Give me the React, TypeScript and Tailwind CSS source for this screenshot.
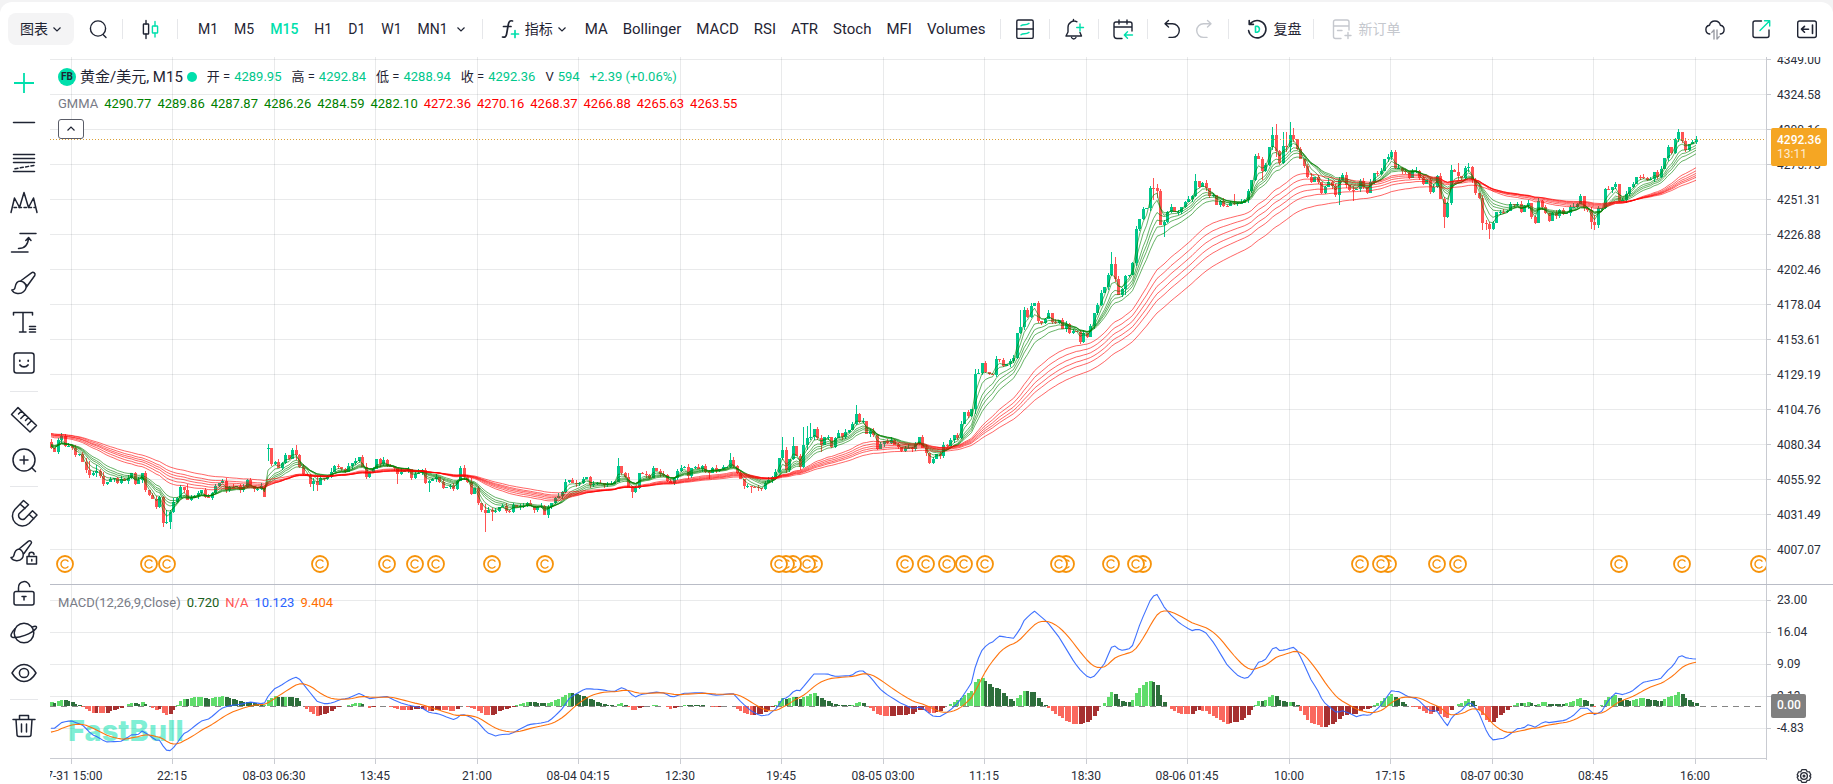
import React from "react";

/* ------------------------------------------------------------------ */
/* Market data                                                         */
/* ------------------------------------------------------------------ */

const STEP = 3.5;
const FIRST = -6;
const LAST = 464;
const ZERO = 706;

const barX = (i: number) => 72 + STEP * i;

// Runs of closing levels: start index, level offset, then one close per bar.
const RUNS: [number, number, number[]][] = [
  [-6, 400, [
    145, 155, 120, 108, 138, 138, 143, 165, 162, 185, 210, 225, 220, 212, 227, 252, 247, 237, 235, 248,
    237, 243, 233, 220, 252, 240, 220, 270, 285, 298, 320, 290, 368, 366, 335, 305, 293, 262, 270, 300,
    295, 288, 280, 270, 292, 293, 278, 258, 250, 243, 270, 260, 262, 257, 270, 262, 240, 257, 268, 268,
    258, 290,
  ]],
  [56, 400, [
    145, 192, 187, 203, 188, 165, 178, 150, 165, 200, 222, 228, 252, 243, 255, 233, 236, 230, 215, 198,
    200, 208, 217, 198, 190, 182, 170, 200, 230, 217, 207, 178, 192, 180, 198, 200, 205, 222, 215, 212,
    208, 235, 222, 218, 210, 248, 243, 238, 232, 245, 263, 260, 258, 268, 242, 205, 230, 245, 283, 265,
    308, 330, 338, 330, 335, 332, 320, 318, 332, 335, 315, 322, 318, 318, 308, 318, 330, 322, 318, 345,
    322,
  ]],
  [137, 380, [
    370, 355, 348, 335, 305, 300, 310, 312, 308, 297, 292, 315, 312, 308, 310, 315, 312, 312, 305, 258,
    280, 290, 320, 335, 325, 280, 282, 285, 293, 265, 272, 282, 285, 303, 308, 295, 272, 265, 260, 288,
    265, 262, 268, 258, 275, 280, 265, 272, 268, 262, 260, 240, 258, 280, 298, 318, 318, 320, 322, 325,
    328, 308, 300, 290, 275, 235, 210, 270, 238, 198, 228, 262, 195, 175, 172, 147, 175, 195, 172, 172,
    200, 175, 160, 172, 155, 150, 132, 102, 125, 122, 163, 153, 165, 207, 192, 182, 188, 180, 195, 200,
    212, 203, 203, 207, 192, 170, 205, 220, 248, 238, 222, 228, 195, 197, 180, 165, 175, 132, 97, 107, 88,
  ]],
  [258, 100, [
    822, 818, 790, 815, 823, 824, 778, 780, 797, 793, 783, 775, 700, 680, 630, 650, 618, 610, 662, 670,
    658, 640, 665, 668, 660, 687, 672, 698, 693, 696, 725, 700, 710, 678, 640, 615, 580, 562, 525, 492,
    538, 584, 567, 528, 525, 490, 387, 358, 328, 325, 264, 265, 274, 374, 365, 337, 322, 337, 336, 320,
    307, 297, 287, 243, 260, 250, 265, 288, 286, 314, 304, 317, 319, 310, 312, 310, 308, 300, 273, 240,
    168, 178, 212, 196, 142, 105, 152, 189, 138, 140, 105, 118, 148, 178, 197, 230, 245, 232, 245, 278,
    262, 245, 258, 285, 240, 225, 256, 269, 270, 268, 243, 262, 278,
  ]],
  [371, 100, [
    245, 218, 222, 213, 178, 170, 155, 205, 203, 213, 217, 233, 212, 212, 235, 253, 240, 275, 262, 227,
    297, 350, 310, 210, 215, 228, 235, 203, 200, 240, 280, 293, 370, 372, 386, 370, 337, 336, 337, 332,
    312, 313, 312, 335, 318, 308, 352, 368, 303, 322, 338, 362, 340, 348, 330, 343, 340, 320, 320,
  ]],
  [430, 100, [
    312, 288, 325, 330, 365, 375, 325, 325, 268, 270, 262, 253, 302, 300, 282, 262, 253, 230, 232, 233,
    240, 237, 215, 232, 208, 175, 142, 158, 118, 97, 122, 150, 133, 125, 118,
  ]],
];

// Long wicks: bar index -> [high, low]
const WICKS: Record<number, [number, number]> = {
  [-3]: [433, 443], 5: [461, 478], 7: [465, 477], 26: [496, 527], 27: [510, 524], 28: [510, 529],
  33: [484, 500], 56: [444, 461], 64: [445, 460], 69: [478, 491], 70: [477, 491], 93: [470, 484],
  102: [480, 492], 112: [465, 480], 118: [504, 532], 120: [508, 521], 156: [458, 480], 160: [486, 498],
  166: [466, 478], 182: [470, 479], 188: [453, 468], 192: [480, 489], 194: [486, 493], 203: [437, 460],
  206: [437, 460], 209: [427, 468], 210: [426, 450], 211: [423, 440], 214: [435, 452], 224: [405, 425],
  258: [369, 414], 271: [310, 334], 272: [307, 330], 297: [252, 276], 298: [257, 282], 301: [275, 295],
  309: [178, 200], 310: [184, 198], 312: [220, 237], 321: [174, 197], 332: [194, 205], 340: [157, 180],
  343: [127, 150], 344: [124, 157], 346: [132, 164], 347: [132, 152], 348: [122, 152], 349: [128, 142],
  362: [177, 205], 366: [186, 201], 377: [150, 160], 392: [197, 228], 394: [165, 205], 396: [163, 180],
  399: [163, 172], 403: [195, 230], 404: [220, 230], 405: [222, 239], 435: [215, 230], 434: [207, 229],
  459: [129, 142],
};

// Sessions that open away from the previous close
const OPENS: Record<number, number> = { 56: 449 };

type Bar = { i: number; open: number; close: number; high: number; low: number };

function buildBars(): Bar[] {
  const close: Record<number, number> = {};
  for (const [start, top, levels] of RUNS) {
    levels.forEach((v, k) => {
      close[start + k] = top + v / 3;
    });
  }
  const bars: Bar[] = [];
  let prev = 442;
  for (let i = FIRST; i <= LAST; i++) {
    const c = close[i] ?? prev;
    const o = OPENS[i] ?? prev;
    const top = Math.min(o, c);
    const bottom = Math.max(o, c);
    const w = WICKS[i];
    const up = ((i * 7 + 61) % 5) * 0.8;
    const down = ((i * 11 + 83) % 4) * 0.9;
    bars.push({
      i,
      open: o,
      close: c,
      high: w ? Math.min(w[0], top) : top - up,
      low: w ? Math.max(w[1], bottom) : bottom + down,
    });
    prev = c;
  }
  return bars;
}

const BARS = buildBars();

function ema(values: number[], period: number, seed: number): number[] {
  const a = 2 / (period + 1);
  let e = seed;
  return values.map((v) => (e = e + a * (v - e)));
}

const toPath = (ys: number[]) =>
  ys.map((y, k) => `${k ? "L" : "M"}${barX(FIRST + k)} ${y.toFixed(1)}`).join("");

const CLOSES = BARS.map((b) => b.close);
const SHORT = ([[3, 444], [5, 445], [8, 445], [10, 445], [12, 444], [15, 444]] as const).map(([p, s]) =>
  toPath(ema(CLOSES, p, s)),
);
const LONG = ([[30, 436], [35, 435], [40, 434], [45, 434], [50, 433], [60, 433]] as const).map(([p, s]) =>
  toPath(ema(CLOSES, p, s)),
);

// DIF line: origin, horizontal scale, and turning points
const DIF_RUNS: [number, number, number, number[][]][] = [
  [40, 580, 2.613, [
    [26, 445], [38, 445], [57, 427], [80, 422], [100, 430], [112, 436], [135, 463], [152, 472], [172, 486],
    [212, 484], [240, 464], [256, 464], [266, 453], [282, 463], [302, 480], [312, 480], [328, 510],
    [340, 512], [352, 500], [374, 462], [386, 455], [420, 424], [443, 416], [474, 385], [498, 376],
    [525, 373], [548, 366], [585, 372], [598, 345], [615, 324], [628, 318], [648, 302], [667, 291],
    [675, 293], [690, 315], [724, 364], [745, 372], [765, 368], [785, 358], [805, 355], [835, 340],
    [860, 356], [905, 349], [940, 368], [965, 376], [998, 384], [1018, 398], [1040, 401], [1084, 420],
    [1102, 402], [1122, 410], [1142, 424], [1168, 458], [1190, 468], [1202, 464], [1230, 462], [1276, 434],
    [1310, 429], [1330, 424], [1362, 390], [1385, 352], [1425, 326], [1460, 328], [1500, 335], [1520, 323],
    [1535, 330], [1553, 352], [1562, 348],
  ]],
  [640, 540, 2.529, [
    [0, 464], [40, 456], [60, 459], [82, 472], [110, 460], [155, 458], [195, 466], [235, 460], [255, 485],
    [280, 512], [305, 528], [325, 524], [345, 505], [362, 474], [372, 474], [392, 450], [405, 452],
    [440, 402], [475, 402], [490, 409], [535, 407], [550, 393], [565, 393], [585, 414], [605, 445],
    [625, 464], [660, 490], [690, 506], [710, 500], [740, 528], [758, 530], [780, 515], [805, 488],
    [838, 430], [850, 370], [866, 328], [880, 312], [892, 306], [908, 288], [945, 295], [962, 265],
    [972, 240], [997, 213], [1030, 246], [1060, 292], [1100, 370], [1115, 392], [1136, 415], [1150, 408],
    [1175, 370], [1192, 322], [1200, 317], [1215, 332], [1238, 326], [1246, 316], [1265, 250], [1290, 182],
    [1305, 158], [1325, 200], [1340, 222], [1365, 250], [1395, 272], [1410, 267], [1430, 277], [1452, 310],
    [1485, 375], [1510, 405],
  ]],
  [1240, 540, 2.644, [
    [0, 410], [12, 415], [25, 411], [48, 367], [65, 362], [88, 323], [95, 322], [105, 332], [125, 328],
    [140, 321], [150, 330], [165, 362], [188, 420], [205, 450], [220, 485], [238, 502], [255, 518],
    [272, 512], [290, 520], [308, 530], [325, 524], [342, 527], [370, 500], [400, 452], [420, 455],
    [445, 470], [470, 478], [500, 512], [520, 512], [548, 558], [562, 528], [585, 512], [605, 488],
    [615, 492], [632, 520], [655, 582], [668, 600], [700, 594], [733, 566], [750, 564], [763, 553],
    [780, 562], [805, 544], [815, 548], [860, 541], [880, 528], [900, 505], [920, 505], [937, 524],
    [955, 516], [975, 480], [993, 459], [1012, 464], [1035, 455], [1065, 427], [1112, 416], [1135, 386],
    [1145, 378], [1160, 350], [1168, 347], [1180, 354], [1205, 357],
  ]],
];

const DIF_POINTS = DIF_RUNS.flatMap(([x0, y0, s, pts]) => pts.map(([x, y]) => [x0 + x / s, y0 + y / 3]));

function sample(points: number[][], x: number): number {
  const k = points.findIndex((p) => p[0] >= x);
  if (k < 0) return points[points.length - 1][1];
  if (k === 0) return points[0][1];
  const [x0, y0] = points[k - 1];
  const [x1, y1] = points[k];
  return y0 + ((y1 - y0) * (x - x0)) / (x1 - x0);
}

const DIF = BARS.map((b) => sample(DIF_POINTS, barX(b.i)));
const DEA = ema(DIF, 9, 733);
const HIST = DIF.map((d, k) => DEA[k] - d);

const PRICES = [
  "4349.00", "4324.58", "4300.16", "4275.73", "4251.31", "4226.88", "4202.46", "4178.04", "4153.61",
  "4129.19", "4104.76", "4080.34", "4055.92", "4031.49", "4007.07",
];
const MACD_LEVELS = ["23.00", "16.04", "9.09", "2.13", "-4.83"];
const TIMES = [
  "07-31 15:00", "22:15", "08-03 06:30", "13:45", "21:00", "08-04 04:15", "12:30", "19:45", "08-05 03:00",
  "11:15", "18:30", "08-06 01:45", "10:00", "17:15", "08-07 00:30", "08:45", "16:00",
];
const EVENTS = [
  65, 149, 167, 320, 387, 415, 436, 492, 545, 779, 786, 793, 807, 814, 905, 926, 947, 964, 985, 1059, 1066,
  1111, 1136, 1143, 1360, 1381, 1388, 1437, 1458, 1619, 1682, 1759,
];
const gridX = (k: number) => Math.floor(71 + 101.5 * k);

/* ------------------------------------------------------------------ */
/* Chart                                                               */
/* ------------------------------------------------------------------ */

function Chart() {
  return (
    <svg
      viewBox="50 57 1783 727"
      className="block h-auto w-full font-[Roboto,'Noto_Sans_CJK_SC',sans-serif]"
      role="img"
      aria-label="黄金/美元 M15"
    >
      <defs>
        <clipPath id="plot">
          <rect x="50" y="57" width="1716" height="702" />
        </clipPath>
      </defs>

      <g fill="#2a2e39" fillOpacity="0.1" shapeRendering="crispEdges">
        {PRICES.map((p, k) => (
          <rect key={p} x="50" y={59 + 35 * k} width="1716" height="1" />
        ))}
        {MACD_LEVELS.map((p, k) => (
          <rect key={p} x="50" y={600 + 32 * k} width="1716" height="1" />
        ))}
        {TIMES.map((t, k) => (
          <rect key={t} x={gridX(k)} y="57" width="1" height="701" />
        ))}
      </g>

      <g clipPath="url(#plot)">
        <g shapeRendering="crispEdges">
          {BARS.map((b) => {
            const x = Math.floor(barX(b.i));
            const top = Math.round(Math.min(b.open, b.close));
            const bottom = Math.round(Math.max(b.open, b.close));
            const high = Math.round(b.high);
            return (
              <g key={b.i} fill={b.close <= b.open ? "#00c78b" : "#ff5353"}>
                <rect x={x} y={high} width="1" height={Math.max(1, Math.round(b.low) - high)} />
                <rect x={x - 1} y={top} width="3" height={Math.max(1, bottom - top)} />
              </g>
            );
          })}
        </g>
        <g fill="none" strokeWidth="1" strokeLinejoin="round">
          {SHORT.map((d, k) => (
            <path key={k} d={d} stroke="#008000" strokeOpacity="0.6" />
          ))}
          {LONG.map((d, k) => (
            <path key={k} d={d} stroke="#ff0000" strokeOpacity="0.6" />
          ))}
        </g>

        <path d="M50 139.5H1766" stroke="#dba036" strokeWidth="1" strokeDasharray="1 2" shapeRendering="crispEdges" />

        <path d="M50 706.5H1766" stroke="#858585" strokeWidth="1" strokeDasharray="6 5" shapeRendering="crispEdges" />
        <g shapeRendering="crispEdges">
          {HIST.map((h, k) => {
            const size = Math.round(Math.abs(h));
            if (!size) return null;
            const rising = k === 0 || h >= HIST[k - 1];
            const fill = h > 0 ? (rising ? "#5fdc6b" : "#2d6e3b") : rising ? "#a63030" : "#fa685e";
            return (
              <rect
                key={k}
                x={Math.floor(barX(FIRST + k)) - 1}
                y={h > 0 ? ZERO - size : ZERO}
                width={k % 2 ? 3 : 4}
                height={size}
                fill={fill}
              />
            );
          })}
        </g>
        <text x="68" y="741" fontSize="29" fontWeight="800" fill="#00dfac" fillOpacity="0.5" className="font-[Inter,sans-serif]">
          FastBull
        </text>
        <path d={toPath(DIF)} fill="none" stroke="#2962ff" strokeOpacity="0.9" strokeWidth="1.1" strokeLinejoin="round" />
        <path d={toPath(DEA)} fill="none" stroke="#ff6d00" strokeOpacity="0.95" strokeWidth="1.1" strokeLinejoin="round" />

        {[...EVENTS].reverse().map((x) => (
          <g key={x} transform={`translate(${x} 564)`} stroke="#f7930a">
            <circle r="8" fill="#fff" strokeWidth="1.8" />
            <path d="M3.4 -2.4A4.1 4.1 0 1 0 3.4 2.4" fill="none" strokeWidth="1.4" />
          </g>
        ))}
      </g>

      <g fill="#c9cbd1" shapeRendering="crispEdges">
        <rect x="1766" y="57" width="1" height="703" />
        <rect x="50" y="758" width="1717" height="1" />
        <rect x="50" y="584" width="1783" height="1" fill="#b9bcc6" />
        {PRICES.map((p, k) => (
          <rect key={p} x="1767" y={59 + 35 * k} width="4" height="1" />
        ))}
        {MACD_LEVELS.map((p, k) => (
          <rect key={p} x="1767" y={600 + 32 * k} width="4" height="1" />
        ))}
        {TIMES.map((t, k) => (
          <rect key={t} x={gridX(k)} y="759" width="1" height="5" />
        ))}
      </g>

      <g fontSize="12" fill="#2a2e39">
        {PRICES.map((p, k) => (
          <text key={p} x="1777" y={64 + 35 * k}>{p}</text>
        ))}
        {MACD_LEVELS.map((p, k) => (
          <text key={p} x="1777" y={604 + 32 * k}>{p}</text>
        ))}
        {TIMES.map((t, k) => (
          <text key={t} x={gridX(k)} y="780" textAnchor="middle">{t}</text>
        ))}
      </g>

      <rect x="1771" y="128" width="56" height="38" rx="2" fill="#f5a623" />
      <text x="1777" y="144" fontSize="12" fontWeight="500" fill="#fff">4292.36</text>
      <text x="1777" y="158" fontSize="12" fill="#fff" fillOpacity="0.8">13:11</text>
      <rect x="1771" y="694" width="35" height="24" rx="2" fill="#808080" />
      <text x="1777" y="709" fontSize="12" fontWeight="500" fill="#fff">0.00</text>

      <g transform="translate(1804 776)" fill="none" stroke="#2a2e39" strokeWidth="1.3">
        <path d="M-2 -6.3H2L3.2 -4.4L5.4 -4.2L6.8 -1.2L5.7 0L6.8 1.2L5.4 4.2L3.2 4.4L2 6.3H-2L-3.2 4.4L-5.4 4.2L-6.8 1.2L-5.7 0L-6.8 -1.2L-5.4 -4.2L-3.2 -4.4Z" />
        <circle r="3.4" />
        <circle r="0.9" />
      </g>
    </svg>
  );
}

/* ------------------------------------------------------------------ */
/* Icons                                                               */
/* ------------------------------------------------------------------ */

const ACCENT = "#00dfac";

function Icon({ children }: { children: React.ReactNode }) {
  return (
    <svg
      width="24"
      height="24"
      viewBox="0 0 24 24"
      fill="none"
      stroke="currentColor"
      strokeWidth="1.4"
      strokeLinecap="round"
      strokeLinejoin="round"
      aria-hidden="true"
    >
      {children}
    </svg>
  );
}

const Chevron = () => (
  <svg width="10" height="10" viewBox="0 0 10 10" fill="none" stroke="currentColor" strokeWidth="1.2" aria-hidden="true">
    <path d="M1.5 3.5L5 7L8.5 3.5" />
  </svg>
);

const SearchIcon = () => (
  <Icon><circle cx="12" cy="11.5" r="7.6" /><path d="M17 17.5L20 20.5" /></Icon>
);
const CandleIcon = () => (
  <Icon>
    <path d="M8 3.5V7M8 17V21.5" /><rect x="5.4" y="7" width="5.2" height="10" rx="0.6" />
    <g stroke={ACCENT}><path d="M17 4.5V9M17 16V20" /><rect x="14.4" y="9" width="5.2" height="7" rx="0.6" /></g>
  </Icon>
);
const FxIcon = () => (
  <Icon>
    <path d="M15.5 4C13 3.2 11.8 4.5 11.3 7.5L9.6 17C9.1 19.8 8 20.6 5.5 20M6.5 9.5H14" strokeWidth="1.7" />
    <path d="M18 13.5V20.5M14.5 17H21.5" stroke={ACCENT} strokeWidth="1.7" />
  </Icon>
);
const PanelsIcon = () => (
  <Icon>
    <rect x="3.8" y="3" width="16.4" height="18.4" rx="1.5" /><path d="M3.8 12H20.2" />
    <path d="M8 8.8C10.5 6.5 12.5 9 16 6.4M8 17.8C10.5 15.5 12.5 18 16 15.4" stroke={ACCENT} />
  </Icon>
);
const BellIcon = () => (
  <Icon>
    <path d="M15 4.8A6.2 6.2 0 0 0 6 10.5V15L4 19H19.5L18 15.5M11.5 2.5V4M9.5 20.5C10.5 22.4 13 22.4 14 20.5" />
    <path d="M18 7V14M14.7 10.5H21.5" stroke={ACCENT} />
  </Icon>
);
const CalendarIcon = () => (
  <Icon>
    <path d="M11 21.5H6A3 3 0 0 1 3 18.5V7A2 2 0 0 1 5 5H19A2 2 0 0 1 21 7V14M3 10H21M8 3V7M16 3V7" />
    <path d="M21.5 18H13.5M16.5 14.8L13.3 18L16.5 21.2" stroke={ACCENT} />
  </Icon>
);
const UndoIcon = () => (
  <Icon><path d="M5.5 6.8H12.5A6.8 6.8 0 0 1 12.5 20.4H9M8.5 3.5L5 6.8L8.5 10" /></Icon>
);
const RedoIcon = () => (
  <Icon><path d="M18.5 6.8H11.5A6.8 6.8 0 0 0 11.5 20.4H15M15.5 3.5L19 6.8L15.5 10" /></Icon>
);
const ReplayIcon = () => (
  <Icon>
    <path d="M3.6 13.5A8.7 8.7 0 1 0 7 5.2L5 6.6M4.2 3.6V7.4H8.4" strokeWidth="1.6" />
    <path d="M10.5 9.2V15.2H12.2C15.2 14.2 15.2 10.2 12.2 9.2Z" stroke={ACCENT} strokeWidth="1.6" />
  </Icon>
);
const OrderIcon = () => (
  <Icon><path d="M11 21.5H5.5A2 2 0 0 1 3.5 19.5V5A2 2 0 0 1 5.5 3H17A2 2 0 0 1 19 5V13M3.5 9H19M7.5 13.5H12M18 15.5V21.5M15 18.5H21" /></Icon>
);
const CloudIcon = () => (
  <Icon>
    <path d="M6.8 17A4.4 4.4 0 0 1 6.5 8.3A5.6 5.6 0 0 1 17.4 8.3A4.4 4.4 0 0 1 17.3 17" />
    <path d="M11 22V13L8.8 15.4M14 13V22L16.2 19.6" stroke="#9a9ca3" />
  </Icon>
);
const ShareIcon = () => (
  <Icon>
    <path d="M12.5 4H6A2 2 0 0 0 4 6V18.5A2 2 0 0 0 6 20.5H18A2 2 0 0 0 20 18.5V13" />
    <path d="M11 13.5L20.5 4M15.5 3.8H20.7V9" stroke={ACCENT} />
  </Icon>
);
const CollapseIcon = () => (
  <Icon>
    <rect x="2.7" y="4" width="18.6" height="16.5" rx="2" />
    <path d="M17.5 8V16.5M13.5 12.2H6.5M9.5 9.3L6.5 12.2L9.5 15.2" strokeWidth="1.6" />
  </Icon>
);

const tools: { name: string; icon: React.ReactNode }[][] = [
  [
    { name: "十字光标", icon: <path d="M14 4V24M4 14H24" stroke={ACCENT} strokeWidth="1.8" strokeLinecap="butt" /> },
    { name: "趋势线", icon: <path d="M3.5 13.5H24.5" /> },
    { name: "斐波那契", icon: <><path d="M3.5 5.5H24.5M3.5 9.5H24.5M3.5 13.5H24.5M3.5 22.5H24.5" /><path d="M5 19.8L24 16.4" strokeDasharray="3 2.4" /></> },
    { name: "形态", icon: <><path d="M1 23.5L4.5 9L9.5 18.5L14 3.5L18.5 18.5L23.5 9L27 23.5" /><path d="M4 18.5H25" strokeDasharray="2.5 2.5" /></> },
    { name: "预测", icon: <path d="M10 4.5H26M1.5 23H18M8.5 19.5C15 19.5 18 16.5 18.5 9M15.8 11.5L18.6 8.5L21 11.5" /> },
    { name: "画笔", icon: <path d="M10.5 12L21.5 3.8C23.5 2.5 25.8 4.5 24.8 6.5L16.5 18M10.5 12C6.5 12 5.5 15.5 5 18.5C4.8 20 3.3 21 1.8 21C4 25.2 10.5 25.5 13.5 22.8C16.5 20.2 17 17 14.8 14.5C13.7 13 12.2 12.2 10.5 12M14 13.5L17.3 17" /> },
    { name: "文本", icon: <path d="M3.5 6V3.5H22.5V6M13 3.5V23M9.5 23H16M19.5 17.5H25.5M19.5 20.3H25.5M19.5 23H25.5" /> },
    { name: "表情", icon: <><rect x="4" y="4" width="20" height="20" rx="2.5" /><path d="M9.8 11.5V12M18.2 11.5V12M10 16C12 18.6 16 18.6 18 16" strokeWidth="1.8" /></> },
  ],
  [
    { name: "测量", icon: <path d="M8 1.6L26.5 19.5L20 26L1.5 8.5ZM11.5 5L8.5 8M15 8.3L10.8 12.5M18.3 11.5L15.5 14.5M21.5 14.8L17.5 18.8" /> },
    { name: "放大", icon: <><circle cx="14" cy="14" r="11" /><path d="M10 14H18M14 10V18M21.5 21.5L25.5 25.5" /></> },
  ],
  [
    { name: "磁铁", icon: <path d="M13.5 1.5L4.8 10.5A10 10 0 0 0 19 24.5L27 16L22.5 11.8L14.5 20A4 4 0 0 1 9 14.8L18.5 5.8ZM10 5L15 9.4M19 15.3L23.8 19.8" /> },
    { name: "锁定画笔", icon: <path d="M9 10L18.5 2.2C20.3 1 22.2 2.8 21.2 4.4L14 14.5M9 10C5.5 10.5 4.5 13.5 4 16C3.8 17.7 2.5 18.5 1 18.6C3.5 22.5 9.5 22.5 12 19.5C14 17 13.5 13.5 11.5 11.5C10.8 10.6 10 10.2 9 10M17 17.5H26.5V25H17ZM19 17.5V15.5C19 12.5 24 12.5 24 15.5M21.8 20.5V22" /> },
    { name: "锁定", icon: <path d="M6 12.5H22A2 2 0 0 1 24 14.5V24A2 2 0 0 1 22 26H6A2 2 0 0 1 4 24V14.5A2 2 0 0 1 6 12.5ZM8.5 12.5V9A5.7 5.7 0 0 1 19.8 7.5M12 17.5H16M14 17.5V21" /> },
    { name: "显示对象", icon: <><circle cx="14" cy="14" r="9.8" /><path d="M5 9.8C1 14 0 17 2.2 18.2C8 20 22 14.5 26 9.5C27.5 7.5 25.5 6.5 22.5 8" /></> },
    { name: "隐藏", icon: <><path d="M2 14C5 9 9.2 5.5 14 5.5C18.8 5.5 23 9 26 14C23 19 18.8 22.5 14 22.5C9.2 22.5 5 19 2 14Z" /><circle cx="14" cy="14" r="4.6" /></> },
  ],
  [{ name: "删除", icon: <path d="M3 7.5H25M9.5 7V3.5H18.5V7M6 7.5L7 22.5A2 2 0 0 0 9 24.5H19A2 2 0 0 0 21 22.5L22 7.5M11.5 12V20M16.5 12V20" /> }],
];

/* ------------------------------------------------------------------ */
/* Layout                                                              */
/* ------------------------------------------------------------------ */

const Divider = () => <span className="mx-3 h-5 w-px shrink-0 bg-[#e6e7ea]" />;

function IconButton({ label, children, disabled }: { label: string; children: React.ReactNode; disabled?: boolean }) {
  return (
    <button type="button" aria-label={label} disabled={disabled} className="flex size-6 shrink-0 items-center justify-center disabled:text-[#c5c8ce]">
      {children}
    </button>
  );
}

function Toolbar() {
  return (
    <header className="flex h-[55px] items-center pr-[14px] pb-px pl-2 text-sm whitespace-nowrap">
      <button type="button" className="flex h-8 items-center gap-1 rounded-lg bg-[#f4f4f5] px-3">
        图表 <Chevron />
      </button>
      <div className="flex items-center pl-3">
        <IconButton label="搜索"><SearchIcon /></IconButton>
        <Divider />
        <div className="flex items-center px-[3px]"><IconButton label="图表类型"><CandleIcon /></IconButton></div>
        <Divider />
      </div>
      <div className="flex items-center">
        {["M1", "M5", "M15", "H1", "D1", "W1", "MN1"].map((t) => (
          <button key={t} type="button" className={t === "M15" ? "px-2 font-medium text-[#00dfac]" : "px-2"}>
            {t}
          </button>
        ))}
        <button type="button" aria-label="更多周期" className="pr-1"><Chevron /></button>
      </div>
      <Divider />
      <div className="flex items-center">
        <button type="button" className="flex items-center gap-1 pr-[10px] pl-[2px]">
          <FxIcon />
          指标 <Chevron />
        </button>
        {["MA", "Bollinger", "MACD", "RSI", "ATR", "Stoch", "MFI", "Volumes"].map((t) => (
          <button key={t} type="button" className="pr-[7px] pl-2 text-[15px] leading-5">{t}</button>
        ))}
      </div>
      <div className="flex items-center">
        <span className="mr-3 ml-2 h-5 w-px shrink-0 bg-[#e6e7ea]" />
        <IconButton label="布局"><PanelsIcon /></IconButton>
        <Divider />
        <IconButton label="提醒"><BellIcon /></IconButton>
        <Divider />
        <IconButton label="日历"><CalendarIcon /></IconButton>
        <Divider />
        <div className="flex items-center gap-2">
          <IconButton label="撤销"><UndoIcon /></IconButton>
          <IconButton label="重做" disabled><RedoIcon /></IconButton>
        </div>
        <Divider />
        <button type="button" className="flex items-center gap-1 pl-1"><ReplayIcon />复盘</button>
        <Divider />
        <button type="button" disabled className="flex items-center gap-1 pl-1 text-[#c5c8ce]"><OrderIcon />新订单</button>
      </div>
      <div className="ml-auto flex items-center gap-[22px]">
        <IconButton label="云端同步"><CloudIcon /></IconButton>
        <IconButton label="分享"><ShareIcon /></IconButton>
        <IconButton label="收起面板"><CollapseIcon /></IconButton>
      </div>
    </header>
  );
}

function Sidebar() {
  return (
    <aside className="flex w-[50px] shrink-0 flex-col items-center pt-[6px] pr-[2px]">
      {tools.map((group, g) => (
        <React.Fragment key={g}>
          {g > 0 && <span className={g === 1 ? "my-2 h-px w-7 bg-[#e6e7ea]" : "my-1.5 h-px w-7 bg-[#e6e7ea]"} />}
          {group.map((t) => (
            <button key={t.name} type="button" aria-label={t.name} className="flex h-10 w-10 items-center justify-center">
              <svg width="28" height="28" viewBox="0 0 28 28" fill="none" stroke="currentColor" strokeWidth="1.5" strokeLinecap="round" strokeLinejoin="round" aria-hidden="true">
                {t.icon}
              </svg>
            </button>
          ))}
        </React.Fragment>
      ))}
    </aside>
  );
}

const quotes = [["开 =", "4289.95"], ["高 =", "4292.84"], ["低 =", "4288.94"], ["收 =", "4292.36"], ["V", "594"]];
const gmma = [
  "4290.77", "4289.86", "4287.87", "4286.26", "4284.59", "4282.10",
  "4272.36", "4270.16", "4268.37", "4266.88", "4265.63", "4263.55",
];

function Legend() {
  return (
    <div className="absolute top-2 left-2 text-[13px] leading-6 whitespace-nowrap">
      <div className="flex h-6 items-center">
        <span className="flex size-[18px] items-center justify-center rounded-full bg-[#00dfac] text-[10px] font-bold">FB</span>
        <h1 className="ml-1 text-[15px] leading-6">黄金/美元, M15</h1>
        <span className="ml-1 size-[10px] rounded-full bg-[#00dfac]" />
        <div className="ml-[10px] flex gap-[10px]">
          {quotes.map(([k, v]) => (
            <span key={k} className="flex gap-1">
              {k} <span className="text-[#00c78b]">{v}</span>
            </span>
          ))}
          <span className="text-[#00c78b]">+2.39 (+0.06%)</span>
        </div>
      </div>
      <div className="mt-[3px] flex h-6 items-center gap-1.5">
        <span className="text-[#787b86]">GMMA</span>
        {gmma.map((v, k) => (
          <span key={v} className={k < 6 ? "text-[#008000]" : "text-[#ff0000]"}>{v}</span>
        ))}
      </div>
      <button type="button" aria-label="收起指标" className="mt-[3px] flex h-5 w-[26px] items-center justify-center rounded-[3px] border border-[#5a5d68] bg-white">
        <svg width="10" height="10" viewBox="0 0 10 10" fill="none" stroke="currentColor" strokeWidth="1.2"><path d="M1.5 6.5L5 3L8.5 6.5" /></svg>
      </button>
    </div>
  );
}

function MacdLegend() {
  return (
    <div className="absolute top-[534px] left-2 flex gap-1.5 text-[13px] leading-6 whitespace-nowrap">
      <span className="text-[#787b86]">MACD(12,26,9,Close)</span>
      <span className="text-[#1b5e20]">0.720</span>
      <span className="text-[#ff5252]">N/A</span>
      <span className="text-[#2962ff]">10.123</span>
      <span className="text-[#ff6d00]">9.404</span>
    </div>
  );
}

export default function App() {
  return (
    <div className="overflow-hidden bg-[#f3f3f4] pt-[2px] font-[Roboto,'Noto_Sans_CJK_SC',sans-serif] text-[#1f2433]">
      <div className="rounded-t-xl bg-white">
        <Toolbar />
        <main className="flex">
          <Sidebar />
          <section className="relative min-w-0 flex-1">
            <Chart />
            <Legend />
            <MacdLegend />
          </section>
        </main>
      </div>
    </div>
  );
}
